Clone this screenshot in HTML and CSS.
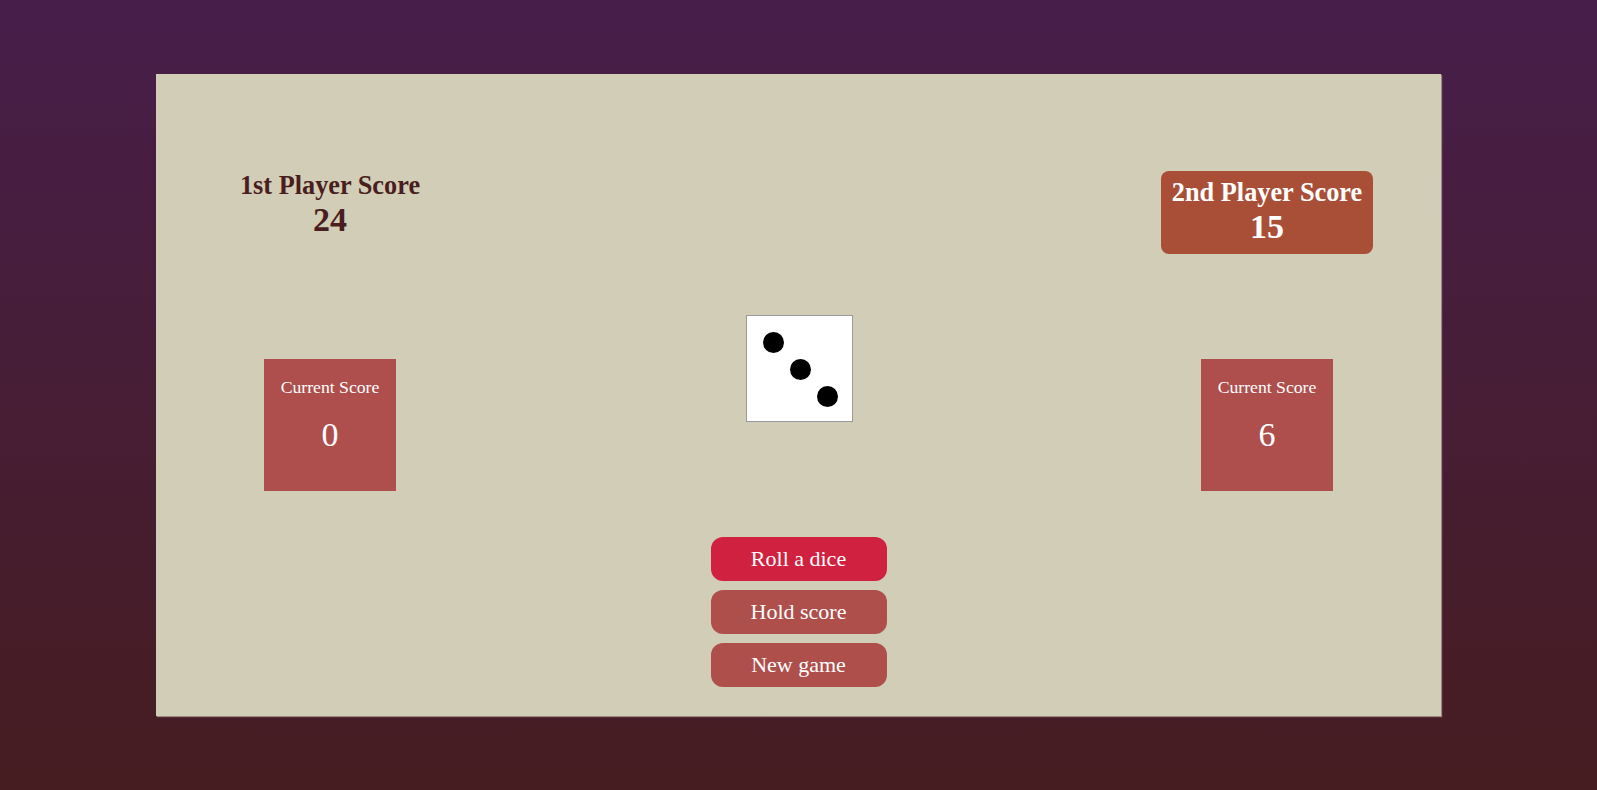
FILE: index.html
```html
<!DOCTYPE html>
<html lang="en">
<head>
<meta charset="utf-8">
<title>Pig Dice Game</title>
<link rel="stylesheet" href="styles.css">
</head>
<body>
<main class="board">
  <section class="player player-one">
    <h2 class="player-title">1st Player Score</h2>
    <p class="player-total">24</p>
  </section>
  <section class="player player-two player-active">
    <h2 class="player-title">2nd Player Score</h2>
    <p class="player-total">15</p>
  </section>

  <div class="current current-one">
    <p class="current-label">Current Score</p>
    <p class="current-value">0</p>
  </div>

  <div class="dice-wrap">
    <div class="dice">
      <span class="dot dot-a"></span>
      <span class="dot dot-b"></span>
      <span class="dot dot-c"></span>
    </div>
  </div>

  <div class="current current-two">
    <p class="current-label">Current Score</p>
    <p class="current-value">6</p>
  </div>

  <div class="controls">
    <button class="btn btn-roll">Roll a dice</button>
    <button class="btn">Hold score</button>
    <button class="btn">New game</button>
  </div>
</main>
</body>
</html>
```
FILE: styles.css
```css
html {
  min-height: 100%;
  background: linear-gradient(to bottom, #471e4a 0%, #461d20 100%);
}

body {
  margin: 0;
  min-height: 790px;
  font-family: "Liberation Serif", "Times New Roman", serif;
}

.board {
  box-sizing: border-box;
  width: 1285px;
  height: 642px;
  margin: 74px auto 0;
  padding-top: 97px;
  background: #d2cdb6;
  box-shadow: 1px 1px 1px rgba(190, 180, 165, 0.7);
  display: grid;
  grid-template-columns: 348px 1fr 348px;
  grid-template-rows: 143px 223px auto;
  grid-template-areas:
    "p1 . p2"
    "c1 dice c2"
    ". btns .";
}

.player {
  justify-self: center;
  align-self: start;
  text-align: center;
  color: #4a1d20;
}

.player-one { grid-area: p1; }
.player-two { grid-area: p2; }

.player-active {
  background: #a94f37;
  color: #ffffff;
  border-radius: 8px;
  padding: 7px 11px;
}

.player-title {
  margin: 0;
  font-size: 26.3px;
  line-height: 29px;
  font-weight: bold;
  white-space: nowrap;
}

.player-total {
  margin: 0;
  font-size: 34px;
  line-height: 40px;
  font-weight: bold;
}

.current {
  box-sizing: border-box;
  width: 132px;
  height: 132px;
  margin-top: 45px;
  justify-self: center;
  align-self: start;
  padding-top: 18px;
  background: #ae4f4d;
  color: #ffffff;
  text-align: center;
}

.current-one { grid-area: c1; }
.current-two { grid-area: c2; }

.current-label {
  margin: 0;
  font-size: 17.7px;
  line-height: 20px;
}

.current-value {
  margin: 19px 0 0;
  font-size: 34px;
  line-height: 38px;
}

.dice-wrap {
  grid-area: dice;
  display: flex;
  justify-content: center;
  align-items: flex-start;
  padding-top: 1px;
  padding-left: 2px;
}

.dice {
  position: relative;
  width: 105px;
  height: 105px;
  background: #ffffff;
  border: 1px solid #9a9a9a;
}

.dot {
  position: absolute;
  width: 21px;
  height: 21px;
  border-radius: 50%;
  background: #000000;
}

.dot-a { left: 16px; top: 16px; }
.dot-b { left: 43px; top: 43px; }
.dot-c { left: 70px; top: 70px; }

.controls {
  grid-area: btns;
  display: flex;
  flex-direction: column;
  align-items: center;
  gap: 9px;
}

.btn {
  width: 176px;
  height: 44px;
  border: none;
  border-radius: 12px;
  background: #ae4f4c;
  color: #ffffff;
  font-family: "Liberation Serif", "Times New Roman", serif;
  font-size: 22px;
  padding: 0;
  cursor: pointer;
}

.btn-roll {
  background: #d02240;
}
```
